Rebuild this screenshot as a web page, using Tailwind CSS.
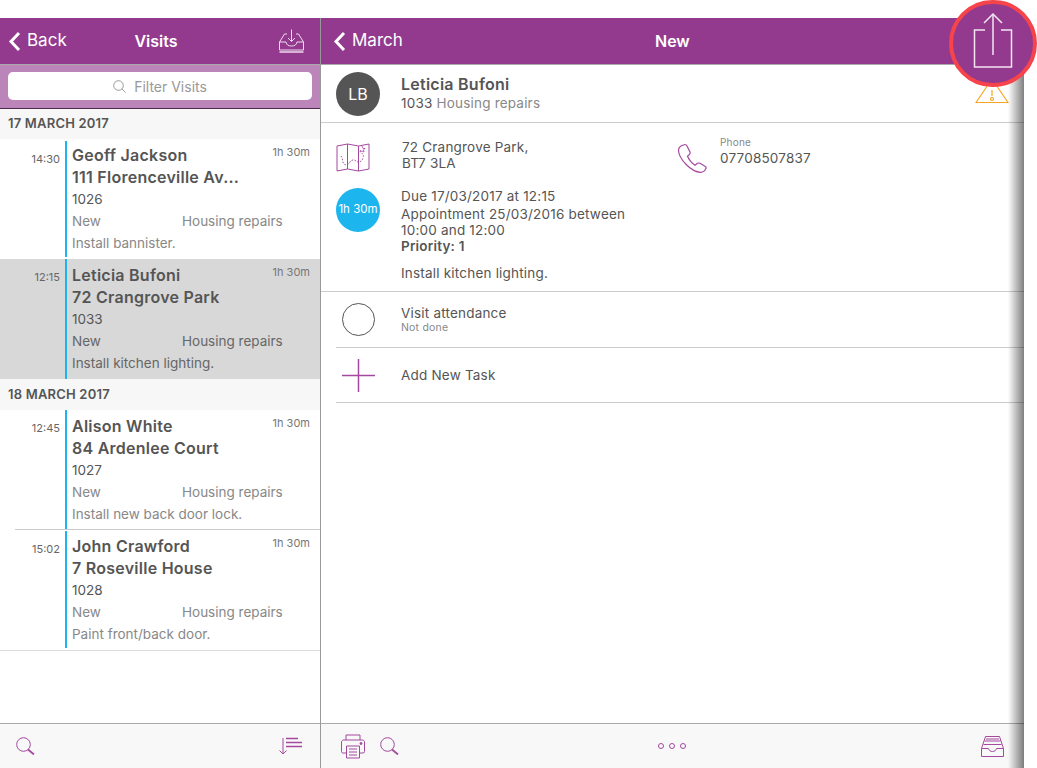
<!DOCTYPE html>
<html lang="en">
<head>
  <meta charset="UTF-8" />
  <title>Visits</title>
  <script src="https://cdn.jsdelivr.net/npm/@tailwindcss/browser@4"></script>
</head>
<body class="bg-white font-['Inter',sans-serif] text-[#555] overflow-hidden">
<div class="relative w-[1037px] h-[768px] pt-[18px] overflow-hidden">
  <div class="flex w-[1024px] h-[750px] relative">

    <!-- visits list -->
    <div class="w-[321px] shrink-0 border-r border-[#999] flex flex-col">
      <div class="h-[47px] shrink-0 bg-[#933a8f] border-b border-[#a9a9a9] flex items-center justify-between pl-[8px] pr-[16px] text-white">
        <div class="flex items-center gap-[6px] w-[100px]">
          <svg width="13" height="21" viewBox="0 0 13 21" fill="none" stroke="white" stroke-width="3"><path d="M11 2L3 10.5L11 19"/></svg>
          <span class="text-[17px]">Back</span>
        </div>
        <span class="text-[16px] font-semibold">Visits</span>
        <div class="w-[100px] flex justify-end">
          <svg width="25" height="24" viewBox="0 0 25 24" fill="none" stroke="#efdcee" stroke-width="1"><path d="M12.5 0.5V12M9 9l3.5 3.5L16 9"/><path d="M8 5H5.5L0.5 13v8h24v-8l-5-8H17"/><path d="M0.5 13H7c.5 3 2.500 4 5.500 4s5-1 5.500-4h6.500"/><path d="M0.500 23h24" stroke-width="1.500"/></svg>
        </div>
      </div>
      <div class="h-[44px] shrink-0 bg-[#bc85ba] border-b border-[#4e2a4c] px-[8px] pt-[7px]">
        <div class="h-[28px] rounded-[5px] bg-white flex items-center justify-center gap-[8px] text-[14px] text-[#999]">
          <svg width="13" height="13" viewBox="0 0 13 13" fill="none" stroke="#999" stroke-width="1"><circle cx="5.500" cy="5.500" r="4.800"/><path d="M9 9l3.500 3.500"/></svg>
          <span>Filter Visits</span>
        </div>
      </div>

      <div class="h-[30px] shrink-0 bg-[#f7f7f7] pl-[8px] flex items-center text-[13px] font-semibold tracking-[0.2px]">17 MARCH 2017</div>

      <div class="h-[120px] shrink-0 flex pt-[2px]">
        <div class="w-[65px] shrink-0 text-right pr-[5px] pt-[10px] text-[11px] text-[#666]">14:30</div>
        <div class="w-[2px] h-[116px] shrink-0 bg-[#1cb5ee]"></div>
        <div class="flex-1 min-w-0 pl-[5px] pr-[10px] pt-[3px]">
          <div class="flex justify-between h-[22px] items-center">
            <span class="text-[16px] font-semibold tracking-[0.25px]">Geoff Jackson</span>
            <span class="text-[11px] text-[#777] -mt-[6px]">1h 30m</span>
          </div>
          <div class="h-[22px] leading-[22px] text-[16px] font-semibold tracking-[0.25px]">111 Florenceville Av...</div>
          <div class="h-[22px] leading-[22px] text-[13.500px]">1026</div>
          <div class="h-[22px] leading-[22px] text-[13.500px] text-[#888] flex"><span class="w-[110px]">New</span><span>Housing repairs</span></div>
          <div class="h-[22px] leading-[22px] text-[13.500px] text-[#888]">Install bannister.</div>
        </div>
      </div>

      <div class="h-[120px] shrink-0 flex bg-[#d8d8d8]">
        <div class="w-[65px] shrink-0 text-right pr-[5px] pt-[10px] text-[11px] text-[#666]">12:15</div>
        <div class="w-[2px] h-[120px] shrink-0 bg-[#1cb5ee]"></div>
        <div class="flex-1 min-w-0 pl-[5px] pr-[10px] pt-[5px]">
          <div class="flex justify-between h-[22px] items-center">
            <span class="text-[16px] font-semibold tracking-[0.25px]">Leticia Bufoni</span>
            <span class="text-[11px] text-[#777] -mt-[6px]">1h 30m</span>
          </div>
          <div class="h-[22px] leading-[22px] text-[16px] font-semibold tracking-[0.25px]">72 Crangrove Park</div>
          <div class="h-[22px] leading-[22px] text-[13.500px]">1033</div>
          <div class="h-[22px] leading-[22px] text-[13.500px] text-[#666] flex"><span class="w-[110px]">New</span><span>Housing repairs</span></div>
          <div class="h-[22px] leading-[22px] text-[13.500px] text-[#666]">Install kitchen lighting.</div>
        </div>
      </div>

      <div class="h-[31px] shrink-0 bg-[#f7f7f7] pl-[8px] flex items-center text-[13px] font-semibold tracking-[0.2px]">18 MARCH 2017</div>

      <div class="h-[120px] shrink-0 flex">
        <div class="w-[65px] shrink-0 text-right pr-[5px] pt-[10px] text-[11px] text-[#666]">12:45</div>
        <div class="w-[2px] h-[119px] shrink-0 bg-[#1cb5ee]"></div>
        <div class="flex-1 min-w-0 pl-[5px] pr-[10px] pt-[5px]">
          <div class="flex justify-between h-[22px] items-center">
            <span class="text-[16px] font-semibold tracking-[0.25px]">Alison White</span>
            <span class="text-[11px] text-[#777] -mt-[6px]">1h 30m</span>
          </div>
          <div class="h-[22px] leading-[22px] text-[16px] font-semibold tracking-[0.25px]">84 Ardenlee Court</div>
          <div class="h-[22px] leading-[22px] text-[13.500px]">1027</div>
          <div class="h-[22px] leading-[22px] text-[13.500px] text-[#888] flex"><span class="w-[110px]">New</span><span>Housing repairs</span></div>
          <div class="h-[22px] leading-[22px] text-[13.500px] text-[#888]">Install new back door lock.</div>
        </div>
      </div>

      <div class="ml-[15px] h-px shrink-0 bg-[#ccc] -mt-px"></div>

      <div class="h-[121px] shrink-0 flex border-b border-[#ddd]">
        <div class="w-[65px] shrink-0 text-right pr-[5px] pt-[11px] text-[11px] text-[#666]">15:02</div>
        <div class="w-[2px] h-[117px] mt-[1px] shrink-0 bg-[#1cb5ee]"></div>
        <div class="flex-1 min-w-0 pl-[5px] pr-[10px] pt-[5px]">
          <div class="flex justify-between h-[22px] items-center">
            <span class="text-[16px] font-semibold tracking-[0.25px]">John Crawford</span>
            <span class="text-[11px] text-[#777] -mt-[6px]">1h 30m</span>
          </div>
          <div class="h-[22px] leading-[22px] text-[16px] font-semibold tracking-[0.25px]">7 Roseville House</div>
          <div class="h-[22px] leading-[22px] text-[13.500px]">1028</div>
          <div class="h-[22px] leading-[22px] text-[13.500px] text-[#888] flex"><span class="w-[110px]">New</span><span>Housing repairs</span></div>
          <div class="h-[22px] leading-[22px] text-[13.500px] text-[#888]">Paint front/back door.</div>
        </div>
      </div>

      <div class="flex-1"></div>
      <div class="h-[45px] shrink-0 bg-[#f8f8f8] border-t border-[#aaa] flex items-center justify-between pl-[16px] pr-[16px]">
        <svg width="19" height="18" viewBox="0 0 19 18" fill="none" stroke="#a448a0" stroke-width="1"><circle cx="7.500" cy="7.500" r="6.800"/><path d="M12 12.500l6 5" stroke-width="1.800"/></svg>
        <svg width="25" height="18" viewBox="0 0 25 18" fill="none" stroke="#a448a0" stroke-width="1"><path d="M4 1V17M0.500 13.500L4 17l3.500-3.500"/><path d="M7 1.500h12M7 5.500h16M7 9.500h16" stroke-width="1.500"/></svg>
      </div>
    </div>

    <!-- visit detail -->
    <div class="flex-1 min-w-0 flex flex-col">
      <div class="h-[47px] shrink-0 bg-[#933a8f] border-b border-[#a9a9a9] flex items-center pl-[12px] text-white relative">
        <svg width="13" height="21" viewBox="0 0 13 21" fill="none" stroke="white" stroke-width="3"><path d="M11 2L3 10.500L11 19"/></svg>
        <span class="text-[17px] ml-[6px]">March</span>
        <span class="absolute left-[334px] text-[16px] font-semibold">New</span>
      </div>

      <div class="h-[58px] shrink-0 border-b border-[#ccc] flex items-center pl-[15px] relative">
        <div class="w-[44px] h-[44px] rounded-full bg-[#555] text-white text-[16px] flex items-center justify-center shrink-0">LB</div>
        <div class="ml-[21px] -mt-[2px]">
          <div class="text-[16px] font-semibold tracking-[0.25px] leading-[20px]">Leticia Bufoni</div>
          <div class="text-[13.500px] leading-[18px] tracking-[0.2px]">1033 <span class="text-[#888]">Housing repairs</span></div>
        </div>
        <svg class="absolute left-[654px] top-[13px]" width="34" height="26" viewBox="0 0 34 26" fill="none" stroke="#f6a623" stroke-width="1.200"><path d="M17 1L1 24.500h32z"/><path d="M17 12v6"/><circle cx="17" cy="21" r="1.500"/></svg>
      </div>

      <div class="flex pl-[15px] pt-[12px] h-[63px] shrink-0">
        <svg class="mt-[8px] shrink-0" width="34" height="29" viewBox="0 0 34 29" fill="none" stroke="#a448a0" stroke-width="1"><path d="M1 3l10.500-2 11 2L33 1v25l-10.500 2-11-2L1 28z"/><path d="M11.500 1v25M22.500 3v25"/><path d="M5 13c2 2 1 6 3 8s5 0 6-2 4-3 6-1 6 1 7-3 0-3-2-6" stroke-dasharray="1.500 1.500"/><path d="M26 3l1 2.500 2 0-1.500 1.500 .5 2-2-1-2 1 .5-2" stroke-width=".8"/></svg>
        <div class="ml-[32px] w-[275px] shrink-0 text-[13.500px] leading-[16px] tracking-[0.2px] pt-[4px]">72 Crangrove Park,<br>BT7 3LA</div>
        <svg class="mt-[8px] shrink-0" width="30" height="30" viewBox="0 0 30 30" fill="none" stroke="#a448a0" stroke-width="1.200"><path d="M5 2.500L8 1.500c1 0 1.500.5 2 1.500l3 6c.5 1 0 1.500-.5 2.500l-2 1.800c1 3 5 7.500 7.500 9l2.500-2c1-.5 1.500-.5 2.500 0l5 3c1 .5 1.300 1.500.8 2.500-1 2-3 3.500-5 3.500C14 29 2 16 1.500 7.500c0-2 1.500-4 3.500-5z"/></svg>
        <div class="ml-[13px] pt-[1px]">
          <div class="text-[10px] leading-[12px] text-[#888] tracking-[0.2px]">Phone</div>
          <div class="text-[13.500px] leading-[20px] tracking-[0.2px]">07708507837</div>
        </div>
      </div>

      <div class="flex pl-[15px] h-[106px] shrink-0 border-b border-[#ccc] ml-0">
        <div class="w-[44px] h-[44px] mt-[2px] rounded-full bg-[#1cb5ee] text-white text-[11.500px] flex items-center justify-center shrink-0 whitespace-nowrap">1h 30m</div>
        <div class="ml-[21px] text-[13.500px] leading-[16px] tracking-[0.2px]">
          <div class="mb-[2px] mt-[2px]">Due 17/03/2017 at 12:15</div>
          <div>Appointment 25/03/2016 between<br>10:00 and 12:00</div>
          <div class="font-semibold">Priority: 1</div>
          <div class="mt-[11px]">Install kitchen lighting.</div>
        </div>
      </div>

      <div class="ml-[15px] h-[56px] shrink-0 border-b border-[#ccc] flex items-center pl-[6px]">
        <div class="w-[33px] h-[33px] rounded-full border border-[#555] shrink-0"></div>
        <div class="ml-[26px]">
          <div class="text-[13.500px] leading-[16px] tracking-[0.2px]">Visit attendance</div>
          <div class="text-[10.500px] leading-[14px] text-[#888] tracking-[0.2px]">Not done</div>
        </div>
      </div>

      <div class="ml-[15px] h-[55px] shrink-0 border-b border-[#ccc] flex items-center pl-[6px]">
        <svg class="shrink-0" width="33" height="33" viewBox="0 0 33 33" stroke="#a448a0" stroke-width="1.500"><path d="M16.500 0V33M0 16.500H33"/></svg>
        <div class="ml-[26px] text-[13.500px] tracking-[0.2px]">Add New Task</div>
      </div>

      <div class="flex-1"></div>
      <div class="h-[45px] shrink-0 bg-[#f8f8f8] border-t border-[#aaa] flex items-center pl-[20px] pr-[20px] relative">
        <svg width="24" height="25" viewBox="0 0 24 25" fill="none" stroke="#a448a0" stroke-width="1"><path d="M5 6V1h14v5"/><path d="M5.500 19H2c-1 0-1.500-.5-1.500-1.500V8c0-1 1-2 2-2h19c1 0 2 1 2 2v9.500c0 1-.5 1.500-1.500 1.500h-3.500"/><path d="M5.500 12h13v12h-13z"/><path d="M8 15h8M8 18h8M8 21h8"/><circle cx="20" cy="9.500" r="1" fill="#a448a0"/></svg>
        <svg class="ml-[15px]" width="19" height="18" viewBox="0 0 19 18" fill="none" stroke="#a448a0" stroke-width="1"><circle cx="7.500" cy="7.500" r="6.800"/><path d="M12 12.500l6 5" stroke-width="1.800"/></svg>
        <div class="absolute left-[337px] flex gap-[5px]">
          <div class="w-[6px] h-[6px] rounded-full border border-[#a448a0]"></div>
          <div class="w-[6px] h-[6px] rounded-full border border-[#a448a0]"></div>
          <div class="w-[6px] h-[6px] rounded-full border border-[#a448a0]"></div>
        </div>
        <svg class="absolute left-[660px]" width="23" height="21" viewBox="0 0 23 21" fill="none" stroke="#a448a0" stroke-width="1"><path d="M.500 12.500V20.500h22v-8"/><path d="M.500 12.500L4.500.500h14l4 12h-7c-.5 2-2 3-4 3s-3.500-1-4-3z"/><path d="M3.500 5h16M2.500 8.500h18M5 3h13"/></svg>
      </div>
    </div>

    <!-- edge shadow of the panel -->
    <div class="absolute right-0 top-[46px] bottom-0 w-[16px] bg-gradient-to-r from-black/0 to-black/50 pointer-events-none"></div>
  </div>

  <!-- highlighted share button -->
  <div class="absolute left-[949px] top-0 w-[88px] h-[87px] rounded-full bg-[#933a8f] border-[4px] border-[#f6444a] flex items-center justify-center">
    <svg width="40" height="56" viewBox="0 0 40 56" fill="none" stroke="#f3e6f2" stroke-width="1.500" class="-mt-[8px]"><path d="M12 18H1.500v37h37V18H28"/><path d="M20 43V2"/><path d="M11 11L20 2l9 9"/></svg>
  </div>
</div>
</body>
</html>
